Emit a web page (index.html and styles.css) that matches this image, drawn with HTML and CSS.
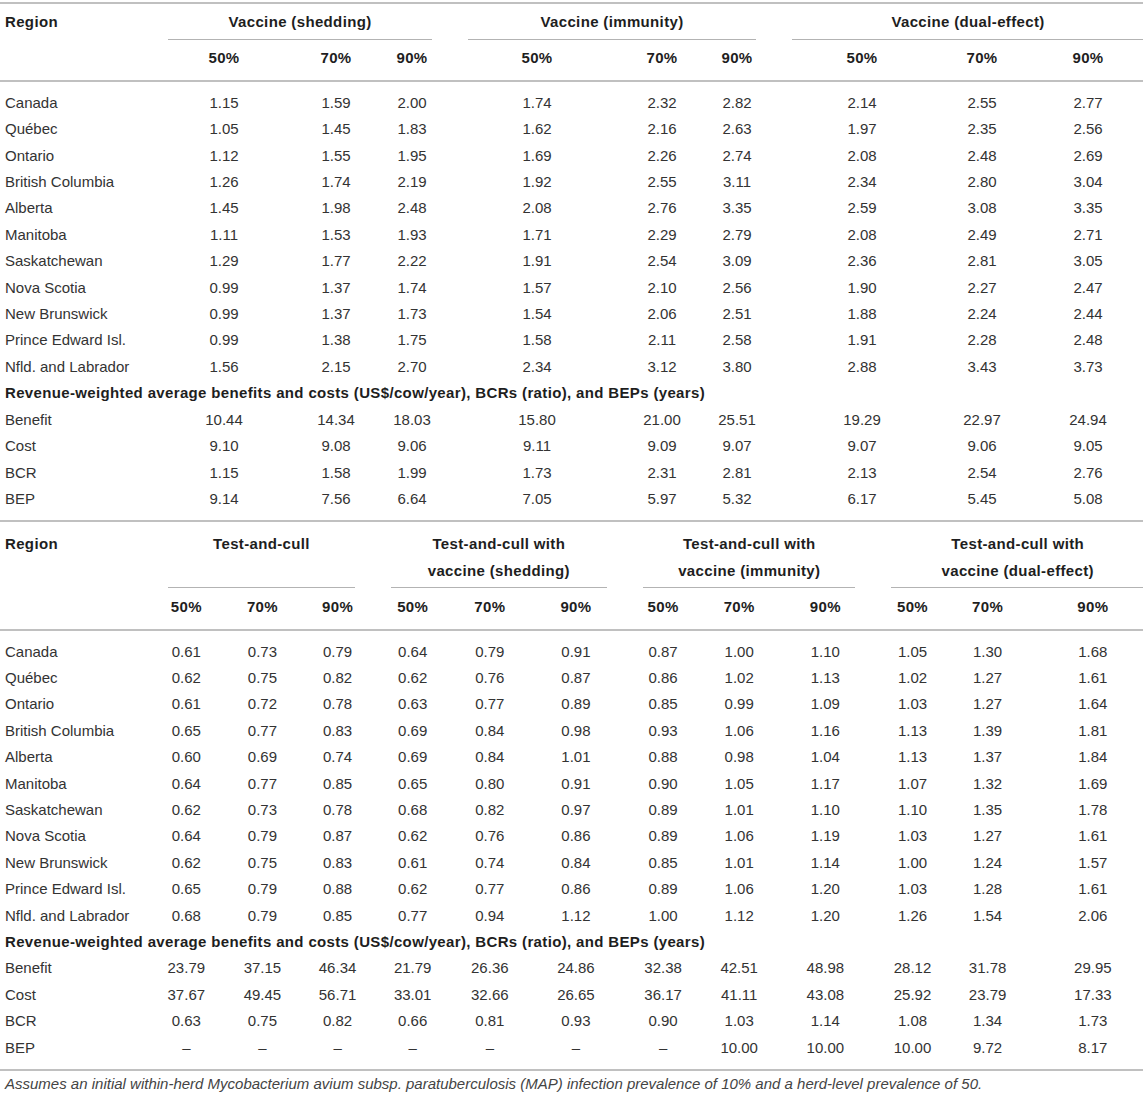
FILE: index.html
```html
<!DOCTYPE html>
<html lang="en">
<head>
<meta charset="utf-8">
<title>Benefit-cost ratios by region</title>
<link rel="stylesheet" href="styles.css">
</head>
<body>
<div class="page">
<table class="tbl t1">
<colgroup>
<col class="w150"><col class="w148"><col class="w76"><col class="w76"><col class="w174"><col class="w76"><col class="w74"><col class="w176"><col class="w64"><col class="w148">
</colgroup>
<thead>
<tr class="h1">
<th class="region" rowspan="2">Region</th>
<th class="grp" colspan="3">Vaccine (shedding)</th>
<th class="grp" colspan="3">Vaccine (immunity)</th>
<th class="grp" colspan="3">Vaccine (dual-effect)</th>
</tr>
<tr class="h2">
<th>50%</th><th>70%</th><th>90%</th>
<th>50%</th><th>70%</th><th>90%</th>
<th>50%</th><th>70%</th><th>90%</th>
</tr>
</thead>
<tbody>
<tr class="first"><td class="name">Canada</td><td>1.15</td><td>1.59</td><td>2.00</td><td>1.74</td><td>2.32</td><td>2.82</td><td>2.14</td><td>2.55</td><td>2.77</td></tr>
<tr><td class="name">Québec</td><td>1.05</td><td>1.45</td><td>1.83</td><td>1.62</td><td>2.16</td><td>2.63</td><td>1.97</td><td>2.35</td><td>2.56</td></tr>
<tr><td class="name">Ontario</td><td>1.12</td><td>1.55</td><td>1.95</td><td>1.69</td><td>2.26</td><td>2.74</td><td>2.08</td><td>2.48</td><td>2.69</td></tr>
<tr><td class="name">British Columbia</td><td>1.26</td><td>1.74</td><td>2.19</td><td>1.92</td><td>2.55</td><td>3.11</td><td>2.34</td><td>2.80</td><td>3.04</td></tr>
<tr><td class="name">Alberta</td><td>1.45</td><td>1.98</td><td>2.48</td><td>2.08</td><td>2.76</td><td>3.35</td><td>2.59</td><td>3.08</td><td>3.35</td></tr>
<tr><td class="name">Manitoba</td><td>1.11</td><td>1.53</td><td>1.93</td><td>1.71</td><td>2.29</td><td>2.79</td><td>2.08</td><td>2.49</td><td>2.71</td></tr>
<tr><td class="name">Saskatchewan</td><td>1.29</td><td>1.77</td><td>2.22</td><td>1.91</td><td>2.54</td><td>3.09</td><td>2.36</td><td>2.81</td><td>3.05</td></tr>
<tr><td class="name">Nova Scotia</td><td>0.99</td><td>1.37</td><td>1.74</td><td>1.57</td><td>2.10</td><td>2.56</td><td>1.90</td><td>2.27</td><td>2.47</td></tr>
<tr><td class="name">New Brunswick</td><td>0.99</td><td>1.37</td><td>1.73</td><td>1.54</td><td>2.06</td><td>2.51</td><td>1.88</td><td>2.24</td><td>2.44</td></tr>
<tr><td class="name">Prince Edward Isl.</td><td>0.99</td><td>1.38</td><td>1.75</td><td>1.58</td><td>2.11</td><td>2.58</td><td>1.91</td><td>2.28</td><td>2.48</td></tr>
<tr><td class="name">Nfld. and Labrador</td><td>1.56</td><td>2.15</td><td>2.70</td><td>2.34</td><td>3.12</td><td>3.80</td><td>2.88</td><td>3.43</td><td>3.73</td></tr>
<tr><td class="section" colspan="10">Revenue-weighted average benefits and costs (US$/cow/year), BCRs (ratio), and BEPs (years)</td></tr>
<tr><td class="name">Benefit</td><td>10.44</td><td>14.34</td><td>18.03</td><td>15.80</td><td>21.00</td><td>25.51</td><td>19.29</td><td>22.97</td><td>24.94</td></tr>
<tr><td class="name">Cost</td><td>9.10</td><td>9.08</td><td>9.06</td><td>9.11</td><td>9.09</td><td>9.07</td><td>9.07</td><td>9.06</td><td>9.05</td></tr>
<tr><td class="name">BCR</td><td>1.15</td><td>1.58</td><td>1.99</td><td>1.73</td><td>2.31</td><td>2.81</td><td>2.13</td><td>2.54</td><td>2.76</td></tr>
<tr class="last"><td class="name">BEP</td><td>9.14</td><td>7.56</td><td>6.64</td><td>7.05</td><td>5.97</td><td>5.32</td><td>6.17</td><td>5.45</td><td>5.08</td></tr>
</tbody>
</table>

<table class="tbl t2">
<colgroup>
<col class="w150"><col class="w72"><col class="w80"><col class="w70"><col class="w80"><col class="w74"><col class="w98"><col class="w76"><col class="w76"><col class="w96"><col class="w78"><col class="w72"><col class="w138">
</colgroup>
<thead>
<tr class="h1">
<th class="region" rowspan="2">Region</th>
<th class="grp" colspan="3">Test-and-cull</th>
<th class="grp" colspan="3">Test-and-cull with<br>vaccine (shedding)</th>
<th class="grp" colspan="3">Test-and-cull with<br>vaccine (immunity)</th>
<th class="grp" colspan="3">Test-and-cull with<br>vaccine (dual-effect)</th>
</tr>
<tr class="h2">
<th>50%</th><th>70%</th><th>90%</th>
<th>50%</th><th>70%</th><th>90%</th>
<th>50%</th><th>70%</th><th>90%</th>
<th>50%</th><th>70%</th><th>90%</th>
</tr>
</thead>
<tbody>
<tr class="first"><td class="name">Canada</td><td>0.61</td><td>0.73</td><td>0.79</td><td>0.64</td><td>0.79</td><td>0.91</td><td>0.87</td><td>1.00</td><td>1.10</td><td>1.05</td><td>1.30</td><td>1.68</td></tr>
<tr><td class="name">Québec</td><td>0.62</td><td>0.75</td><td>0.82</td><td>0.62</td><td>0.76</td><td>0.87</td><td>0.86</td><td>1.02</td><td>1.13</td><td>1.02</td><td>1.27</td><td>1.61</td></tr>
<tr><td class="name">Ontario</td><td>0.61</td><td>0.72</td><td>0.78</td><td>0.63</td><td>0.77</td><td>0.89</td><td>0.85</td><td>0.99</td><td>1.09</td><td>1.03</td><td>1.27</td><td>1.64</td></tr>
<tr><td class="name">British Columbia</td><td>0.65</td><td>0.77</td><td>0.83</td><td>0.69</td><td>0.84</td><td>0.98</td><td>0.93</td><td>1.06</td><td>1.16</td><td>1.13</td><td>1.39</td><td>1.81</td></tr>
<tr><td class="name">Alberta</td><td>0.60</td><td>0.69</td><td>0.74</td><td>0.69</td><td>0.84</td><td>1.01</td><td>0.88</td><td>0.98</td><td>1.04</td><td>1.13</td><td>1.37</td><td>1.84</td></tr>
<tr><td class="name">Manitoba</td><td>0.64</td><td>0.77</td><td>0.85</td><td>0.65</td><td>0.80</td><td>0.91</td><td>0.90</td><td>1.05</td><td>1.17</td><td>1.07</td><td>1.32</td><td>1.69</td></tr>
<tr><td class="name">Saskatchewan</td><td>0.62</td><td>0.73</td><td>0.78</td><td>0.68</td><td>0.82</td><td>0.97</td><td>0.89</td><td>1.01</td><td>1.10</td><td>1.10</td><td>1.35</td><td>1.78</td></tr>
<tr><td class="name">Nova Scotia</td><td>0.64</td><td>0.79</td><td>0.87</td><td>0.62</td><td>0.76</td><td>0.86</td><td>0.89</td><td>1.06</td><td>1.19</td><td>1.03</td><td>1.27</td><td>1.61</td></tr>
<tr><td class="name">New Brunswick</td><td>0.62</td><td>0.75</td><td>0.83</td><td>0.61</td><td>0.74</td><td>0.84</td><td>0.85</td><td>1.01</td><td>1.14</td><td>1.00</td><td>1.24</td><td>1.57</td></tr>
<tr><td class="name">Prince Edward Isl.</td><td>0.65</td><td>0.79</td><td>0.88</td><td>0.62</td><td>0.77</td><td>0.86</td><td>0.89</td><td>1.06</td><td>1.20</td><td>1.03</td><td>1.28</td><td>1.61</td></tr>
<tr><td class="name">Nfld. and Labrador</td><td>0.68</td><td>0.79</td><td>0.85</td><td>0.77</td><td>0.94</td><td>1.12</td><td>1.00</td><td>1.12</td><td>1.20</td><td>1.26</td><td>1.54</td><td>2.06</td></tr>
<tr><td class="section" colspan="13">Revenue-weighted average benefits and costs (US$/cow/year), BCRs (ratio), and BEPs (years)</td></tr>
<tr><td class="name">Benefit</td><td>23.79</td><td>37.15</td><td>46.34</td><td>21.79</td><td>26.36</td><td>24.86</td><td>32.38</td><td>42.51</td><td>48.98</td><td>28.12</td><td>31.78</td><td>29.95</td></tr>
<tr><td class="name">Cost</td><td>37.67</td><td>49.45</td><td>56.71</td><td>33.01</td><td>32.66</td><td>26.65</td><td>36.17</td><td>41.11</td><td>43.08</td><td>25.92</td><td>23.79</td><td>17.33</td></tr>
<tr><td class="name">BCR</td><td>0.63</td><td>0.75</td><td>0.82</td><td>0.66</td><td>0.81</td><td>0.93</td><td>0.90</td><td>1.03</td><td>1.14</td><td>1.08</td><td>1.34</td><td>1.73</td></tr>
<tr class="last"><td class="name">BEP</td><td>–</td><td>–</td><td>–</td><td>–</td><td>–</td><td>–</td><td>–</td><td>10.00</td><td>10.00</td><td>10.00</td><td>9.72</td><td>8.17</td></tr>
</tbody>
</table>
<p class="note">Assumes an initial within-herd Mycobacterium avium subsp. paratuberculosis (MAP) infection prevalence of 10% and a herd-level prevalence of 50.</p>
</div>
</body>
</html>
```

FILE: styles.css
```css
html, body {
  margin: 0;
  padding: 0;
  background: #ffffff;
}

body {
  font-family: "Liberation Sans", Arial, Helvetica, sans-serif;
  font-size: 15px;
  color: #333333;
}

.page {
  width: 100%;
  overflow: hidden;
  padding-top: 2px;
}

.tbl {
  border-collapse: collapse;
  table-layout: fixed;
  width: 1162px;
}

.tbl th,
.tbl td {
  padding: 0;
  line-height: 26.4px;
  text-align: center;
  white-space: nowrap;
}

.tbl th {
  font-weight: bold;
  color: #1e1e1e;
  letter-spacing: 0.35px;
}

.tbl thead {
  border-bottom: 2px solid #c0c0c0;
}

.t1 {
  border-top: 2px solid #c0c0c0;
}

.tbl tbody {
  border-bottom: 2px solid #c0c0c0;
}

.w150 { width: 150px; }
.w148 { width: 148px; }
.w138 { width: 138px; }
.w98 { width: 98px; }
.w96 { width: 96px; }
.w80 { width: 80px; }
.w78 { width: 78px; }
.w76 { width: 76px; }
.w74 { width: 74px; }
.w72 { width: 72px; }
.w70 { width: 70px; }
.w64 { width: 64px; }
.w174 { width: 174px; }
.w176 { width: 176px; }

.tbl .region {
  text-align: left;
  vertical-align: top;
  padding-left: 5px;
}

.tbl .grp {
  vertical-align: top;
  background: linear-gradient(#b3b3b3, #b3b3b3) no-repeat center bottom / calc(100% - 36px) 1px;
}

.t1 .h1 th {
  padding-top: 5px;
  padding-bottom: 5px;
}

.t2 .h1 th {
  padding-top: 9px;
  padding-bottom: 4px;
}

.t1 .h2 th {
  padding-top: 5px;
  padding-bottom: 8px;
}

.t2 .h2 th {
  padding-top: 6px;
  padding-bottom: 8px;
}

.tbl .name {
  text-align: left;
  padding-left: 5px;
}

.tbl .section {
  text-align: left;
  padding-left: 5px;
  font-weight: bold;
  color: #1e1e1e;
  letter-spacing: 0.35px;
}

.tbl .first td {
  padding-top: 8px;
}

.tbl .last td {
  padding-bottom: 8px;
}

.note {
  margin: 0;
  padding: 4px 0 0 5px;
  font-size: 15px;
  line-height: 18px;
  font-style: italic;
  color: #444444;
}
```
